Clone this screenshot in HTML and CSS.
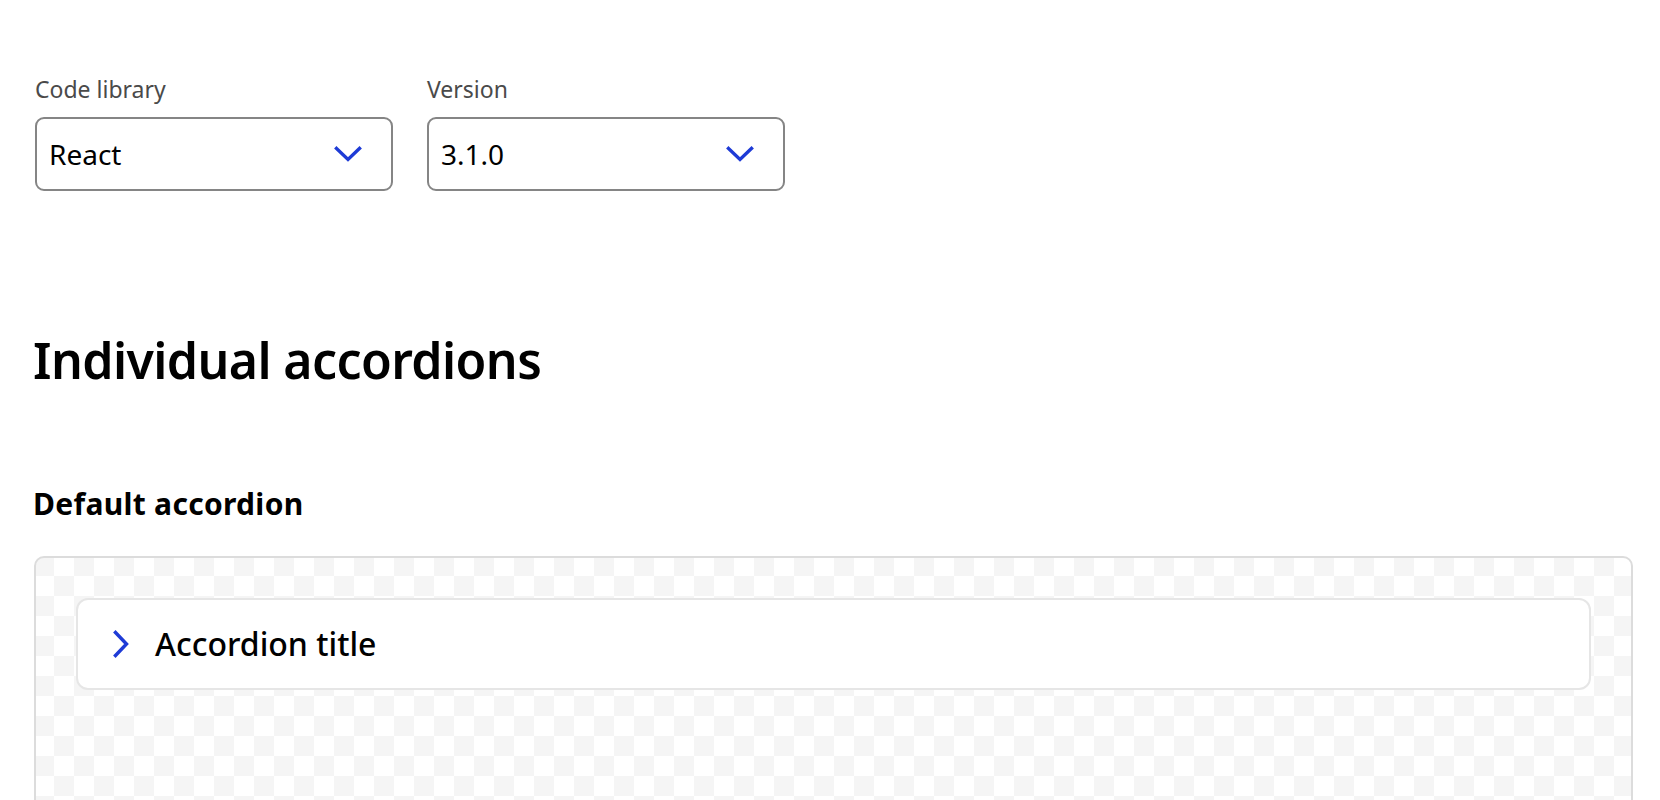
FILE: index.html
```html
<!DOCTYPE html>
<html lang="en">
<head>
<meta charset="utf-8">
<title>Accordion</title>
<link rel="stylesheet" href="styles.css">
</head>
<body>
<main class="page">
  <div class="filters">
    <div class="field">
      <label class="field-label">Code library</label>
      <div class="select">
        <span class="select-value">React</span>
        <svg class="chev-down" width="28" height="16" viewBox="0 0 28 16"><path d="M2.5 2.5 L14 13.5 L25.5 2.5" fill="none" stroke="#1e3bd6" stroke-width="3.4" stroke-linecap="square"/></svg>
      </div>
    </div>
    <div class="field">
      <label class="field-label">Version</label>
      <div class="select">
        <span class="select-value">3.1.0</span>
        <svg class="chev-down" width="28" height="16" viewBox="0 0 28 16"><path d="M2.5 2.5 L14 13.5 L25.5 2.5" fill="none" stroke="#1e3bd6" stroke-width="3.4" stroke-linecap="square"/></svg>
      </div>
    </div>
  </div>

  <h1 class="section-title">Individual accordions</h1>
  <h2 class="sub-title">Default accordion</h2>

  <div class="preview">
    <div class="accordion">
      <svg class="chev-right" width="16" height="28" viewBox="0 0 16 28"><path d="M2.5 2.5 L13.5 14 L2.5 25.5" fill="none" stroke="#1e3bd6" stroke-width="3.4" stroke-linecap="square"/></svg>
      <span class="accordion-title">Accordion title</span>
    </div>
  </div>
</main>
</body>
</html>
```

FILE: styles.css
```css
* { box-sizing: border-box; }
html, body { margin: 0; background: #fff; }
body {
  font-family: "Noto Sans", "Open Sans", sans-serif;
  color: #000;
}
.page {
  padding: 76px 27px 0 35px;
}
.filters {
  display: flex;
  gap: 34px;
}
.field {
  display: flex;
  flex-direction: column;
}
.field-label {
  font-size: 23px;
  line-height: 26px;
  color: #4a4a4a;
  margin-bottom: 15px;
}
.select {
  width: 358px;
  height: 74px;
  border: 2px solid #858585;
  border-radius: 9px;
  display: flex;
  align-items: center;
  justify-content: space-between;
  padding: 0 29px 0 12px;
}
.select-value {
  font-size: 28px;
  line-height: 34px;
}
.chev-down { display: block; }
.section-title {
  margin: 138px 0 0 -2px;
  font-size: 50px;
  line-height: 62px;
  font-weight: 600;
  letter-spacing: -0.6px;
}
.sub-title {
  margin: 96px 0 0 -2px;
  font-size: 30px;
  line-height: 34px;
  font-weight: 700;
  letter-spacing: 0.3px;
}
.preview {
  margin: 35px 0 0 -1px;
  border: 2px solid #dcdcdc;
  border-radius: 10px;
  padding: 40px 40px 200px;
  background-color: #fff;
  background-image: repeating-conic-gradient(#fff 0 25%, #f5f5f5 0 50%);
  background-size: 40px 40px;
  background-origin: border-box;
  background-position: 0 0;
}
.accordion {
  height: 92px;
  background: #fff;
  border: 2px solid #e6e6e6;
  border-radius: 12px;
  display: flex;
  align-items: center;
  padding-left: 35px;
  gap: 26px;
}
.chev-right { display: block; }
.accordion-title {
  font-size: 32px;
  line-height: 38px;
  font-weight: 500;
}
```
